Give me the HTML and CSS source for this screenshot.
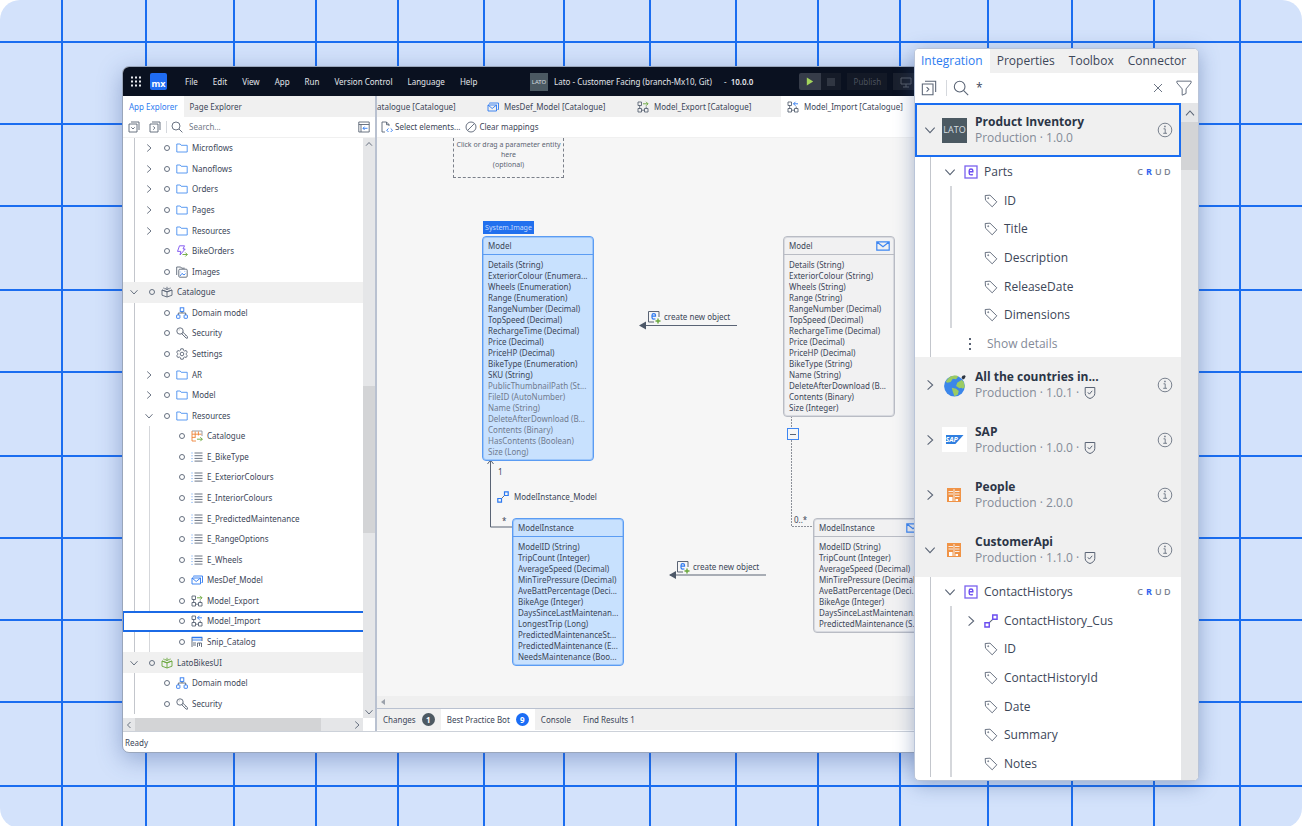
FILE: index.html
```html
<!DOCTYPE html>
<html lang="en">
<head>
<meta charset="utf-8">
<title>Lato - Customer Facing</title>
<link rel="stylesheet" href="styles.css">
</head>
<body>
<svg class="symbols" aria-hidden="true">
  <symbol id="right" viewBox="0 0 12 12"><path d="M4.2 2.5 8 6 4.2 9.5"/></symbol>
  <symbol id="down" viewBox="0 0 12 12"><path d="M2.5 4.2 6 8l3.5-3.8"/></symbol>
  <symbol id="up" viewBox="0 0 12 12"><path d="M3 7.7 6 4.5l3 3.2"/></symbol>
  <symbol id="left" viewBox="0 0 12 12"><path d="M7.5 3 4.5 6l3 3"/></symbol>
  <symbol id="folder" viewBox="0 0 12 12"><path stroke="#4a90f0" d="M.8 10V2h3.4l1 1.3h6V10z"/></symbol>
  <symbol id="flow" viewBox="0 0 12 12"><path stroke="#7a4ff0" d="M3.5.8h5L7 4h2.200L4 10l.8-3.600H1.500z"/><path stroke="#68a63a" d="M6.500 9.500h4.800M9.300 7.500l2 2-2 2"/></symbol>
  <symbol id="images" viewBox="0 0 12 12"><path d="M.7 9V1h4l1 1.200h3"/><rect x="2.800" y="3.200" width="8.400" height="8" rx="1"/><path stroke="#2b78f0" d="m4 10 2-2.600L8 9l1.500-1.400M8.600 5.400h.6M4.600 6h.5"/></symbol>
  <symbol id="module" viewBox="0 0 12 12"><path d="M6 5.800 1 4v5.200L6 11l5-1.800V4zM6 5.800V11M1 4l5 1.800L11 4M3.300 3.200 2.800 1.600M6 3.200V.8M8.700 3.200l.5-1.600M4 2.500 6 3.600l2-1.100"/></symbol>
  <symbol id="domain" viewBox="0 0 12 12"><path d="M6 4.500V6M2.300 8V6h7.400v2"/><g stroke="#2b78f0"><rect x="4.200" y=".8" width="3.600" height="3.600"/><rect x=".6" y="8" width="3.300" height="3.300" rx=".5"/><rect x="8.100" y="8" width="3.300" height="3.300" rx=".5"/></g></symbol>
  <symbol id="key" viewBox="0 0 12 12"><circle cx="4" cy="4" r="3.200"/><path d="m5.500 6.500 4.700 4.700h1.200V9.500L6.700 5M2.800 2.900h.6M8.500 9.500l1-1"/></symbol>
  <symbol id="gear" viewBox="0 0 12 12"><circle cx="6" cy="6" r="1.800"/><path d="m4.800.8-.4 1.600-1 .6-1.600-.5L.7 4.400 1.900 5.500v1L.7 7.600l1.100 1.900L3.400 9l1 .6.4 1.600h2.400l.4-1.600 1-.6 1.600.5 1.100-1.900-1.200-1.100v-1l1.200-1.100-1.100-1.900-1.600.5-1-.6L7.200.8z"/></symbol>
  <symbol id="service" viewBox="0 0 12 12"><path stroke="#8c929c" d="M1 1h10v5"/><path stroke="#ee8236" d="M5 11H1V1M1 4.200h9.500M4.200 1.500v6M7.400 1.500v4M1 7.400h3.500"/><path stroke="#68a63a" d="M6 9.200h5.300M9.300 7.200l2 2-2 2"/></symbol>
  <symbol id="enum" viewBox="0 0 12 12"><path stroke="#4a90f0" stroke-dasharray="1 1.800" d="M1 1.500v10"/><path d="M3.500 2h8M3.500 4.700h8M3.500 7.400h8M3.500 10.100h8"/></symbol>
  <symbol id="mesdef" viewBox="0 0 12 12"><path stroke="#2b78f0" d="M1 4h8.500v6H1zM1 4l4.200 3.500L9.500 4M2.500 2.500V2h9v6.500h-1"/></symbol>
  <symbol id="export" viewBox="0 0 12 12"><path d="M1 1h3.500v3.500H1zM1 7.500h3.500V11H1zM7.500 7.500H11V11H7.500zM2.700 4.500v3M4.500 9.200h3M9.200 7.500v-2"/><path stroke="#68a63a" d="M6 2.800h5M9 .8l2 2-2 2"/></symbol>
  <symbol id="import" viewBox="0 0 12 12"><path d="M1 1h3.500v3.500H1zM1 7.500h3.500V11H1zM7.500 7.500H11V11H7.500zM2.700 4.500v3M4.500 9.200h3M9.200 7.500v-2"/><path stroke="#2b78f0" d="M6.500 2.800H11M8.500.8l-2 2 2 2"/></symbol>
  <symbol id="snip" viewBox="0 0 12 12"><path d="M1 11V1.500h10V5M2 7h3M2 9h3M6.500 11V7h4v4M8.500 7v3"/><path stroke="#2b78f0" stroke-width="1.500" d="M.7 1.500h10.600"/><path stroke="#2b78f0" d="M1 4h10"/></symbol>
  <symbol id="collapse" viewBox="0 0 12 12"><path d="M1 3h8v8H1zM3 1h8v8M3.300 6.300 5 8l1.700-1.700"/></symbol>
  <symbol id="expand" viewBox="0 0 12 12"><path d="M1 3h8v8H1zM3 1h8v8M4.200 5.300 5.900 7 4.200 8.700"/></symbol>
  <symbol id="search" viewBox="0 0 12 12"><circle cx="5" cy="5" r="4"/><path d="m8 8 3.400 3.400"/></symbol>
  <symbol id="locate" viewBox="0 0 12 12"><path d="M.8 1h10.400v10H.8zM.8 3.500h10.400M3 3.500V11"/><path stroke="#2b78f0" d="M9.500 7.300H5M6.600 5.600 5 7.300 6.600 9"/></symbol>
  <symbol id="selectel" viewBox="0 0 12 12"><path d="M4 11H1V1h4.500l2.500 2.500V5M5.500 1v2.700H8"/><path stroke="#2b78f0" d="m7.500 7.500-1.800 1.700L7.500 11M9.700 7.500l1.800 1.700L9.700 11"/></symbol>
  <symbol id="clear" viewBox="0 0 12 12"><circle cx="6" cy="6" r="5"/><path d="m2.600 9.400 6.800-6.800"/></symbol>
  <symbol id="mail" viewBox="0 0 14 10"><path stroke="#3d86f2" stroke-width="1.200" d="M.8.8h12.400v8.400H.8zM1 1l6 4.700L13 1"/></symbol>
  <symbol id="newobj" viewBox="0 0 14 14"><path d="M7 12H1.500V1.500h10.500V7"/><path stroke="#2b78f0" stroke-width="1.200" d="M5 6.200h3.500V5c0-.8-.6-1.300-1.700-1.300S5 4.500 5 5.500v2c0 1 .6 1.600 1.700 1.600.8 0 1.200-.1 1.700-.4"/><path stroke="#68a63a" stroke-width="1.400" d="M11 8.500v5M8.500 11h5"/></symbol>
  <symbol id="assoc" viewBox="0 0 12 12"><path d="m4.300 7.700 3.400-3.400"/><path stroke="currentColor" stroke-width="1.200" d="M.8 7.500h3.700v3.700H.8zM7.500.8h3.700v3.700H7.500z"/></symbol>
  <symbol id="entity" viewBox="0 0 14 14"><rect x="1" y="1" width="12" height="12" stroke="#7a62ee" stroke-width="1.300"/><path stroke="#6a4cf0" stroke-width="1.400" d="M5.200 6.800h3.600V5.500c0-.9-.6-1.500-1.800-1.500s-1.800.7-1.800 1.700v2.500c0 1 .6 1.700 1.800 1.700.8 0 1.300-.1 1.800-.5"/></symbol>
  <symbol id="tag" viewBox="0 0 14 14"><path d="M1.200 1.500 6 1.200l6.800 6.600-4.600 5L1.500 6.200z"/><circle cx="4.200" cy="4.200" r=".5"/></symbol>
  <symbol id="info" viewBox="0 0 16 16"><circle cx="8" cy="8" r="6.800"/><path d="M6.500 6.800h1.700v4.400M6.200 11.300h3.800"/><path stroke-width="1.500" d="M7.300 4.500h1.300"/></symbol>
  <symbol id="shield" viewBox="0 0 12 14"><path d="M1.200 1.500h9.600v6c0 2.500-2.300 4.200-4.800 5-2.500-.8-4.800-2.500-4.800-5z"/><path d="m3.800 6.300 1.600 1.800 2.800-3.300"/></symbol>
  <symbol id="close" viewBox="0 0 12 12"><path d="m2 2 8 8M10 2l-8 8"/></symbol>
  <symbol id="funnel" viewBox="0 0 14 14"><path d="M.8 1h12.400v1.500L8.800 7.800v4l-3.400 1.500V7.800L.8 2.500z"/></symbol>
  <symbol id="table" viewBox="0 0 14 14"><path fill="#f09346" stroke="none" d="M0 0h14v14H0z"/><path stroke="#f6ede6" d="M7 1v12M1.500 3.500H6M1.500 6H6M8 3.500h4.500M8 6h4.500M8 8.500h4.500"/><path fill="#fff" stroke="none" d="M2 9h3.500v4H2zM8.500 11H11v2H8.500z"/></symbol>
  <symbol id="globe" viewBox="0 0 22 22"><circle cx="10.500" cy="12" r="9.500" fill="#3b86ea" stroke="none"/><path fill="#9bcb62" stroke="none" d="M7 3.200c3-1.300 6-1.200 7 0l-2 2.500-3-.5-2 3-3 .8-1.500-1C4 6 5 4 7 3.200zM13 9l4-2.500 2 1.500 1 5-2 1.500-1-1-2 .5-3-2zM8 13.500l4 1 2.500 2-1 3.500-3 1.300-1.500-4z"/><path fill="#2b3440" stroke="none" d="m17 4 1-1.500 2-.5.800 1.200L19.500 5.500 18 6z"/></symbol>
</svg>

<main class="desktop">
  <svg class="grid-lines" aria-hidden="true">
    <path d="M62 0V2000M146 0V2000M234 0V2000M316 0V2000M398 0V2000M484 0V2000M564 0V2000M650 0V2000M736 0V2000M818 0V2000M900 0V2000M988 0V2000M1072 0V2000M1154 0V2000M1240 0V2000M0 42H3000M0 124H3000M0 206H3000M0 290H3000M0 372H3000M0 456H3000M0 538H3000M0 620H3000M0 702H3000M0 786H3000"/>
  </svg>

  <section class="app">
    <header class="titlebar">
      <svg class="dots" viewBox="0 0 12 12"><path d="M1 1.500h11M1 5.500h11M1 9.500h11"/></svg>
      <span class="logo">mx</span>
      <nav class="menu"><button>File</button><button>Edit</button><button>View</button><button>App</button><button>Run</button><button>Version Control</button><button>Language</button><button>Help</button></nav>
      <span class="lato small">LATO</span>
      <span class="title">Lato - Customer Facing (branch-Mx10, Git)</span>
      <span class="version">- <b>10.0.0</b></span>
      <button class="run" aria-label="Run locally"><svg viewBox="0 0 10 10"><path d="M1 0v10l8-5z"/></svg></button>
      <button class="stop" aria-label="Stop"><i></i></button>
      <button class="publish">Publish</button>
      <button class="viewapp" aria-label="View app"><svg viewBox="0 0 12 12"><path d="M1 2h10v6H1zM6 8v3M3 11h6"/></svg></button>
    </header>
    <div class="workspace">
      <aside class="explorer">
        <div class="tabs"><button class="tab active">App Explorer</button><button class="tab">Page Explorer</button></div>
        <div class="tools">
          <button aria-label="Collapse all"><svg class="ic"><use href="#collapse"/></svg></button>
          <button aria-label="Expand"><svg class="ic"><use href="#expand"/></svg></button>
          <label class="find"><svg class="ic"><use href="#search"/></svg><input type="text" placeholder="Search..." aria-label="Search the app"></label>
          <button aria-label="Locate"><svg class="ic"><use href="#locate"/></svg></button>
        </div>
        <div class="tree-area">
          <ul class="tree">
            <li class="row l2"><svg class="ic tw"><use href="#right"/></svg><i class="dot"></i><svg class="ic"><use href="#folder"/></svg>Microflows</li>
            <li class="row l2"><svg class="ic tw"><use href="#right"/></svg><i class="dot"></i><svg class="ic"><use href="#folder"/></svg>Nanoflows</li>
            <li class="row l2"><svg class="ic tw"><use href="#right"/></svg><i class="dot"></i><svg class="ic"><use href="#folder"/></svg>Orders</li>
            <li class="row l2"><svg class="ic tw"><use href="#right"/></svg><i class="dot"></i><svg class="ic"><use href="#folder"/></svg>Pages</li>
            <li class="row l2"><svg class="ic tw"><use href="#right"/></svg><i class="dot"></i><svg class="ic"><use href="#folder"/></svg>Resources</li>
            <li class="row l2"><svg class="ic tw"></svg><i class="dot"></i><svg class="ic"><use href="#flow"/></svg>BikeOrders</li>
            <li class="row l2"><svg class="ic tw"></svg><i class="dot"></i><svg class="ic"><use href="#images"/></svg>Images</li>
            <li class="row l1"><svg class="ic tw"><use href="#down"/></svg><i class="dot"></i><svg class="ic"><use href="#module"/></svg>Catalogue</li>
            <li class="row l2"><svg class="ic tw"></svg><i class="dot"></i><svg class="ic"><use href="#domain"/></svg>Domain model</li>
            <li class="row l2"><svg class="ic tw"></svg><i class="dot"></i><svg class="ic"><use href="#key"/></svg>Security</li>
            <li class="row l2"><svg class="ic tw"></svg><i class="dot"></i><svg class="ic"><use href="#gear"/></svg>Settings</li>
            <li class="row l2"><svg class="ic tw"><use href="#right"/></svg><i class="dot"></i><svg class="ic"><use href="#folder"/></svg>AR</li>
            <li class="row l2"><svg class="ic tw"><use href="#right"/></svg><i class="dot"></i><svg class="ic"><use href="#folder"/></svg>Model</li>
            <li class="row l2"><svg class="ic tw"><use href="#down"/></svg><i class="dot"></i><svg class="ic"><use href="#folder"/></svg>Resources</li>
            <li class="row l3"><svg class="ic tw"></svg><i class="dot"></i><svg class="ic"><use href="#service"/></svg>Catalogue</li>
            <li class="row l3"><svg class="ic tw"></svg><i class="dot"></i><svg class="ic"><use href="#enum"/></svg>E_BikeType</li>
            <li class="row l3"><svg class="ic tw"></svg><i class="dot"></i><svg class="ic"><use href="#enum"/></svg>E_ExteriorColours</li>
            <li class="row l3"><svg class="ic tw"></svg><i class="dot"></i><svg class="ic"><use href="#enum"/></svg>E_InteriorColours</li>
            <li class="row l3"><svg class="ic tw"></svg><i class="dot"></i><svg class="ic"><use href="#enum"/></svg>E_PredictedMaintenance</li>
            <li class="row l3"><svg class="ic tw"></svg><i class="dot"></i><svg class="ic"><use href="#enum"/></svg>E_RangeOptions</li>
            <li class="row l3"><svg class="ic tw"></svg><i class="dot"></i><svg class="ic"><use href="#enum"/></svg>E_Wheels</li>
            <li class="row l3"><svg class="ic tw"></svg><i class="dot"></i><svg class="ic"><use href="#mesdef"/></svg>MesDef_Model</li>
            <li class="row l3"><svg class="ic tw"></svg><i class="dot"></i><svg class="ic"><use href="#export"/></svg>Model_Export</li>
            <li class="row l3 selected"><svg class="ic tw"></svg><i class="dot"></i><svg class="ic"><use href="#import"/></svg>Model_Import</li>
            <li class="row l3"><svg class="ic tw"></svg><i class="dot"></i><svg class="ic"><use href="#snip"/></svg>Snip_Catalog</li>
            <li class="row l1"><svg class="ic tw"><use href="#down"/></svg><i class="dot"></i><svg class="ic green"><use href="#module"/></svg>LatoBikesUI</li>
            <li class="row l2"><svg class="ic tw"></svg><i class="dot"></i><svg class="ic"><use href="#domain"/></svg>Domain model</li>
            <li class="row l2"><svg class="ic tw"></svg><i class="dot"></i><svg class="ic"><use href="#key"/></svg>Security</li>
          </ul>
          <div class="vbar"><svg class="ic"><use href="#up"/></svg><i class="thumb"></i><svg class="ic"><use href="#down"/></svg></div>
          <div class="hbar"><svg class="ic"><use href="#left"/></svg><i class="thumb"></i><svg class="ic"><use href="#right"/></svg></div>
        </div>
      </aside>

      <div class="editor">
        <div class="tabs">
          <button class="tab cut"><span>Catalogue [Catalogue]</span></button>
          <button class="tab doc"><svg class="ic"><use href="#mesdef"/></svg>MesDef_Model [Catalogue]</button>
          <button class="tab doc"><svg class="ic"><use href="#export"/></svg>Model_Export [Catalogue]</button>
          <button class="tab doc active"><svg class="ic"><use href="#import"/></svg>Model_Import [Catalogue]</button>
        </div>
        <div class="tools">
          <button><svg class="ic"><use href="#selectel"/></svg>Select elements...</button>
          <button><svg class="ic"><use href="#clear"/></svg>Clear mappings</button>
        </div>
        <div class="canvas">
          <svg class="wires" aria-hidden="true">
            <path d="M263 187.500H360M293 437H389M113.500 322V389H136M110.500 326l3-4 3 4"/>
            <path class="fill" d="M262 187.500l7-4v8zM292 437l7-4v8z"/>
            <path class="dash" d="M414.500 278V388.500H437"/>
          </svg>
          <div class="param">Click or drag a parameter entity here<br>(optional)</div>
          <div class="basis">System.Image</div>
          <article class="entity mapped e1">
            <h3>Model</h3>
            <ul><li>Details (String)</li><li>ExteriorColour (Enumera...</li><li>Wheels (Enumeration)</li><li>Range (Enumeration)</li><li>RangeNumber (Decimal)</li><li>TopSpeed (Decimal)</li><li>RechargeTime (Decimal)</li><li>Price (Decimal)</li><li>PriceHP (Decimal)</li><li>BikeType (Enumeration)</li><li>SKU (String)</li><li class="off">PublicThumbnailPath (St...</li><li class="off">FileID (AutoNumber)</li><li class="off">Name (String)</li><li class="off">DeleteAfterDownload (B...</li><li class="off">Contents (Binary)</li><li class="off">HasContents (Boolean)</li><li class="off">Size (Long)</li></ul>
          </article>
          <article class="entity mapped e2">
            <h3>ModelInstance</h3>
            <ul><li>ModelID (String)</li><li>TripCount (Integer)</li><li>AverageSpeed (Decimal)</li><li>MinTirePressure (Decimal)</li><li>AveBattPercentage (Deci...</li><li>BikeAge (Integer)</li><li>DaysSinceLastMaintenan...</li><li>LongestTrip (Long)</li><li>PredictedMaintenanceSt...</li><li>PredictedMaintenance (E...</li><li>NeedsMaintenance (Boo...</li></ul>
          </article>
          <article class="entity e3">
            <h3>Model<svg class="mail"><use href="#mail"/></svg></h3>
            <ul><li>Details (String)</li><li>ExteriorColour (String)</li><li>Wheels (String)</li><li>Range (String)</li><li>RangeNumber (Decimal)</li><li>TopSpeed (Decimal)</li><li>RechargeTime (Decimal)</li><li>Price (Decimal)</li><li>PriceHP (Decimal)</li><li>BikeType (String)</li><li>Name (String)</li><li>DeleteAfterDownload (B...</li><li>Contents (Binary)</li><li>Size (Integer)</li></ul>
          </article>
          <article class="entity e4">
            <h3>ModelInstance<svg class="mail"><use href="#mail"/></svg></h3>
            <ul><li>ModelID (String)</li><li>TripCount (Integer)</li><li>AverageSpeed (Decimal)</li><li>MinTirePressure (Decimal)</li><li>AveBattPercentage (Deci...</li><li>BikeAge (Integer)</li><li>DaysSinceLastMaintenan...</li><li>PredictedMaintenance (S...</li></ul>
          </article>
          <div class="note n1"><svg><use href="#newobj"/></svg>create new object</div>
          <div class="note n2"><svg><use href="#newobj"/></svg>create new object</div>
          <div class="note n3"><svg class="ic blue"><use href="#assoc"/></svg>ModelInstance_Model</div>
          <span class="note n4">1</span>
          <span class="note n5">*</span>
          <span class="note n6">0..*</span>
          <button class="fold" aria-label="Collapse"></button>
        </div>
        <div class="canvas-bar"><i></i></div>
        <div class="tabs dock">
          <button class="tab">Changes<b class="count">1</b></button>
          <button class="tab active">Best Practice Bot<b class="count blue-bg">9</b></button>
          <button class="tab">Console</button>
          <button class="tab">Find Results 1</button>
        </div>
      </div>
    </div>
    <footer class="status">Ready</footer>
  </section>

  <section class="panel">
    <div class="ptabs"><button class="ptab active">Integration</button><button class="ptab">Properties</button><button class="ptab">Toolbox</button><button class="ptab">Connector</button></div>
    <div class="ptools">
      <button aria-label="Expand"><svg class="i16"><use href="#expand"/></svg></button>
      <label class="find"><svg class="i16"><use href="#search"/></svg><input type="text" value="*" aria-label="Search services"></label>
      <button aria-label="Clear"><svg class="i12"><use href="#close"/></svg></button>
      <button aria-label="Filter"><svg class="i16"><use href="#funnel"/></svg></button>
    </div>
    <div class="plist">
      <div class="services">
        <div class="svc current"><svg class="i16"><use href="#down"/></svg><span class="lato">LATO</span><div class="who"><strong>Product Inventory</strong><span>Production · 1.0.0</span></div><svg class="i16"><use href="#info"/></svg></div>
        <ul class="members">
          <li class="head"><svg class="i16"><use href="#down"/></svg><svg class="i14"><use href="#entity"/></svg>Parts<span class="crud"><i>C</i><b>R</b><i>U</i><i>D</i></span></li>
          <li class="attr"><svg class="i14"><use href="#tag"/></svg>ID</li>
          <li class="attr"><svg class="i14"><use href="#tag"/></svg>Title</li>
          <li class="attr"><svg class="i14"><use href="#tag"/></svg>Description</li>
          <li class="attr"><svg class="i14"><use href="#tag"/></svg>ReleaseDate</li>
          <li class="attr"><svg class="i14"><use href="#tag"/></svg>Dimensions</li>
          <li class="more"><svg class="i14" viewBox="0 0 14 14"><path stroke-width="2" stroke-dasharray="2 3" d="M7 1v12"/></svg>Show details</li>
        </ul>
        <div class="svc"><svg class="i16"><use href="#right"/></svg><svg class="pic"><use href="#globe"/></svg><div class="who"><strong>All the countries in...</strong><span>Production · 1.0.1 ·<svg class="shield"><use href="#shield"/></svg></span></div><svg class="i16"><use href="#info"/></svg></div>
        <div class="svc"><svg class="i16"><use href="#right"/></svg><span class="sap"><em>SAP</em></span><div class="who"><strong>SAP</strong><span>Production · 1.0.0 ·<svg class="shield"><use href="#shield"/></svg></span></div><svg class="i16"><use href="#info"/></svg></div>
        <div class="svc"><svg class="i16"><use href="#right"/></svg><svg class="pic tbl"><use href="#table"/></svg><div class="who"><strong>People</strong><span>Production · 2.0.0</span></div><svg class="i16"><use href="#info"/></svg></div>
        <div class="svc"><svg class="i16"><use href="#down"/></svg><svg class="pic tbl"><use href="#table"/></svg><div class="who"><strong>CustomerApi</strong><span>Production · 1.1.0 ·<svg class="shield"><use href="#shield"/></svg></span></div><svg class="i16"><use href="#info"/></svg></div>
        <ul class="members">
          <li class="head"><svg class="i16"><use href="#down"/></svg><svg class="i14"><use href="#entity"/></svg>ContactHistorys<span class="crud"><i>C</i><b>R</b><i>U</i><i>D</i></span></li>
          <li class="attr nested"><svg class="i16"><use href="#right"/></svg><svg class="i14 violet"><use href="#assoc"/></svg>ContactHistory_Cus</li>
          <li class="attr"><svg class="i14"><use href="#tag"/></svg>ID</li>
          <li class="attr"><svg class="i14"><use href="#tag"/></svg>ContactHistoryId</li>
          <li class="attr"><svg class="i14"><use href="#tag"/></svg>Date</li>
          <li class="attr"><svg class="i14"><use href="#tag"/></svg>Summary</li>
          <li class="attr"><svg class="i14"><use href="#tag"/></svg>Notes</li>
        </ul>
      </div>
      <div class="pbar"><svg class="i16"><use href="#up"/></svg><i></i></div>
    </div>
  </section>
</main>
</body>
</html>
```
FILE: styles.css
```css
* { box-sizing: border-box; }
html { background: #fff; }
body { margin: 0; font: 8px/12px "Noto Sans", "Open Sans", sans-serif; color: #3c4658; }
button { font: inherit; color: inherit; background: none; border: 0; padding: 0; display: flex; align-items: center; white-space: nowrap; }
ul { list-style: none; margin: 0; padding: 0; }
h3 { margin: 0; font: inherit; }
input { font: inherit; color: inherit; border: 0; padding: 0; background: none; min-width: 0; width: 100%; outline: 0; }
input::placeholder { color: #737a87; opacity: 1; }
svg { fill: none; stroke: #5a6475; stroke-width: 1; flex: none; display: block; }
.symbols { position: absolute; width: 0; height: 0; }
.ic, .i12 { width: 12px; height: 12px; stroke-width: .9; }
.i14 { width: 14px; height: 14px; stroke-width: .9; }
.i16 { width: 16px; height: 16px; stroke-width: .8; }
.green { stroke: #68a63a; }
.blue { color: #2b78f0; }
.violet { color: #6a4cf0; }

.desktop { position: relative; display: grid; grid-template-columns: minmax(0, 1fr) 285px; min-height: 100vh; padding: 48px 103px 47px 122px; background: #d3e2fb; border-radius: 20px; overflow: hidden; }
.grid-lines { position: absolute; inset: 0; width: 100%; height: 100%; stroke: #1a6df0; stroke-width: 2; }

/* application window */
.app { position: relative; display: flex; flex-direction: column; margin: 18px -20px 28px 0; background: #fff; border: 1px solid #9aa6bb; border-radius: 7px; overflow: hidden; box-shadow: 0 6px 24px rgba(50, 80, 150, .4); }
.titlebar { display: flex; align-items: center; height: 29px; padding-left: 7px; background: #0a1120; color: #e2e5ea; overflow: hidden; }
.dots { width: 12px; height: 12px; stroke: #e8eaee; stroke-width: 2; stroke-dasharray: 2 2; }
.logo { width: 17px; height: 17px; margin-left: 8px; border-radius: 2px; background: #1f6cf2; color: #fff; font-size: 9px; font-weight: 700; line-height: 21px; text-align: center; }
.menu { display: flex; gap: 15px; margin-left: 18px; width: 345px; }
.lato { display: grid; place-items: center; background: #4b5962; color: #d7dde0; font-size: 9px; }
.lato.small { width: 18px; height: 18px; font-size: 6px; }
.title { min-width: 165px; margin-left: 6px; white-space: nowrap; }
.version { margin-left: 5px; white-space: nowrap; }
.version b { font-weight: 600; margin-left: 2px; }
.run { justify-content: center; width: 22px; height: 17px; margin-left: 46px; background: #363c49; border-radius: 2px 0 0 2px; }
.run svg { width: 8px; height: 9px; fill: #a3d45c; stroke: none; }
.stop { justify-content: center; width: 20px; height: 17px; background: #151b28; }
.stop i { width: 8px; height: 8px; background: #303642; }
.publish { justify-content: center; width: 40px; height: 17px; margin-left: 6px; background: #131926; color: #4b515d; }
.viewapp { justify-content: center; width: 26px; height: 17px; margin-left: 6px; background: #1a202d; }
.viewapp svg { width: 12px; height: 12px; stroke: #565c69; }

.workspace { flex: 1; display: grid; grid-template-columns: 254px minmax(0, 1fr); }
.explorer { display: flex; flex-direction: column; min-width: 0; border-right: 2px solid #b9c1d0; }
.tabs { display: flex; height: 21px; background: #f0f0f0; }
.tab { padding: 0 6px; }
.tab.active { background: #fff; }
.explorer .tab.active { color: #2d7cf0; }
.tools { display: flex; align-items: center; height: 21px; padding: 0 5px; gap: 9px; border-bottom: 1px solid #f0f0f0; }
.find { flex: 1; display: flex; align-items: center; gap: 6px; padding-left: 5px; border-left: 1px solid #d5d8dd; }
.explorer .find { margin-left: -4px; padding-left: 4px; }
.tree-area { flex: 1; display: grid; grid-template: minmax(0, 1fr) 13px / minmax(0, 1fr) 12px; }
.tree { display: grid; grid-auto-rows: 1fr; padding: 0 0 4px; }
.row { display: flex; align-items: center; gap: 4px; padding-left: 5px; white-space: nowrap; background: no-repeat 11px 0 / 1px 100% linear-gradient(#c3c6cc, #c3c6cc); }
.row.l1 { background: #f0f0f0; }
.row.l2 { padding-left: 20px; }
.row.l3 { padding-left: 35px; background: no-repeat 11px 0 / 1px 100% linear-gradient(#c3c6cc, #c3c6cc), no-repeat 26px 0 / 1px 100% linear-gradient(#d5d7db, #d5d7db); }
.row.selected { padding-left: 34px; border: solid #1b6ae6; border-width: 2px 0 2px 1px; background: none; }
.tw { margin-right: 5px; }
.dot { width: 6px; height: 6px; margin-right: 2px; border: 1px solid #667080; border-radius: 50%; }
.vbar { display: grid; grid-template-rows: 12px 1fr 12px; justify-items: center; background: #e5e6e8; }
.vbar .thumb { width: 12px; height: 147px; margin-top: 236px; background: #d3d4d6; }
.hbar { display: grid; grid-template-columns: 12px 186px 1fr; align-items: center; justify-items: center; background: #e5e6e8; }
.hbar .ic:last-child { justify-self: end; }
.hbar .thumb { width: 100%; height: 13px; background: #d3d4d6; }

.editor { display: flex; flex-direction: column; min-width: 0; }
.editor .tools { padding: 0 4px; gap: 5px; }
.editor .tools button { gap: 2px; }
.doc { gap: 5px; min-width: 150px; padding: 0 6px; }
.cut { width: 104px; padding: 0; overflow: hidden; }
.cut span { margin-left: -5px; }
.canvas { position: relative; flex: 1; min-height: 558px; background: #f6f6f6; overflow: hidden; }
.wires { position: absolute; inset: 0; width: 100%; height: 100%; }
.wires .fill { fill: #4d5868; stroke: none; }
.wires .dash { stroke: #8c9099; stroke-dasharray: 2 1; }
.param { position: absolute; left: 76px; top: 0; width: 111px; height: 40px; padding: 2px 1px; border: 1px dashed #7b808a; border-top: 0; font-size: 7px; line-height: 10px; text-align: center; color: #5b6473; }
.basis { position: absolute; left: 106px; top: 83px; width: 51px; height: 13px; background: #2270ee; color: #c5dbff; font-size: 7px; line-height: 13px; text-align: center; }
.entity { position: absolute; width: 112px; background: #f1f1f2; border: 1px solid #b9bcc4; border-radius: 4px; box-shadow: 0 0 0 1px #d8dae0 inset; }
.entity h3 { display: flex; align-items: center; justify-content: space-between; height: 18px; padding: 0 4px 0 5px; border-bottom: 1px solid #b9bcc4; }
.entity ul { padding: 4px 4px 3px 5px; line-height: 11px; }
.entity li { white-space: nowrap; }
.mail { width: 14px; height: 10px; }
.mapped { background: #c8e1fe; border-color: #5b9cf3; box-shadow: 0 0 0 1px #9cc6fa inset; }
.mapped h3 { border-color: #5b9cf3; }
.off { color: #707b8e; }
.e1 { left: 105px; top: 98px; }
.e2 { left: 135px; top: 380px; }
.e3 { left: 406px; top: 98px; }
.e4 { left: 436px; top: 380px; }
.note { position: absolute; display: flex; align-items: center; gap: 3px; line-height: 12px; white-space: nowrap; }
.note svg:not(.ic) { width: 14px; height: 14px; }
.n1 { left: 270px; top: 172px; }
.n2 { left: 299px; top: 422px; }
.n3 { left: 120px; top: 353px; gap: 5px; }
.n4 { left: 121px; top: 328px; }
.n5 { left: 125px; top: 377px; }
.n6 { left: 417px; top: 376px; }
.fold { position: absolute; left: 410px; top: 290px; width: 12px; height: 12px; padding: 0 2px; border: 1px solid #3d86f2; background: #f6f6f6; }
.fold::before { content: ""; width: 100%; height: 1px; background: #5a6475; }
.canvas-bar { height: 12px; padding: 3px 4px; background: #efefef; }
.canvas-bar i { display: block; width: 0; border: solid transparent; border-width: 3px 4px 3px 0; border-right-color: #9ba1ab; }
.dock { height: 23px; border-top: 1px solid #b9c1d0; border-bottom: 1px solid #fff; }
.dock .tab { gap: 6px; }
.count { width: 13px; height: 13px; border-radius: 50%; background: #4d5962; color: #fff; line-height: 13px; text-align: center; }
.blue-bg { background: #1a6df5; }
.status { height: 21px; padding: 0 2px; border-top: 1px solid #ccd1d9; line-height: 21px; }

/* integration panel */
.panel { position: relative; display: flex; flex-direction: column; background: #fff; border: 1px solid #b9c4d8; border-radius: 5px; overflow: hidden; font: 12px/16px "Open Sans", "Noto Sans", sans-serif; box-shadow: 0 4px 20px rgba(50, 80, 140, .4); }
.ptabs { display: flex; height: 24px; background: #f0f0f0; }
.ptab { padding: 0 7px; }
.ptab.active { padding: 0 7px 0 6px; background: #fff; color: #2d7cf0; }
.ptools { display: flex; align-items: center; gap: 17px; height: 30px; padding: 0 6px; }
.ptools > button:last-child { margin-left: -5px; }
.ptools .find { gap: 7px; margin-left: -8px; padding-left: 6px; }
.plist { flex: 1; display: grid; grid-template-columns: minmax(0, 1fr) 17px; }
.svc { display: flex; align-items: center; height: 55px; padding: 0 8px 0 7px; background: #f0f0f0; }
.svc.current { border: 2px solid #1a6df0; height: 54px; padding: 0 6px 0 5px; }
.svc .lato, .sap { width: 25px; height: 25px; margin: 0 8px 0 4px; }
.svc svg.pic { width: 24px; height: 24px; margin: 0 8px 0 5px; }
.svc svg.tbl { width: 14px; height: 14px; margin: 0 14px 0 9px; }
.sap { display: grid; place-items: center; background: #fff; }
.sap em { width: 18px; height: 9px; background: #2f7fe0; clip-path: polygon(0 0, 100% 0, 55% 100%, 0 100%); color: #fff; font-weight: 700; font-size: 7px; line-height: 9px; }
.who { flex: 1; min-width: 0; }
.who strong { display: block; color: #2b3546; font-weight: 700; }
.who span { display: flex; align-items: center; color: #848b98; }
.shield { width: 12px; height: 14px; margin-left: 5px; }
.members { display: grid; grid-auto-rows: 1fr; height: 200px; background: no-repeat 15px 0 / 1px 100% linear-gradient(#c3c6cc, #c3c6cc); }
.members li { display: flex; align-items: center; gap: 6px; padding-top: 2px; }
.members .head { padding: 2px 11px 0 27px; }
.attr { padding-left: 69px; background: no-repeat 35px 0 / 2px 100% linear-gradient(#d5d7db, #d5d7db); }
.nested { padding-left: 48px; }
.nested .i16 { margin-right: -1px; }
.more { padding-left: 48px; color: #848b98; }
.members .more { gap: 10px; }
.crud { display: flex; gap: 3px; margin-left: auto; font-size: 9px; color: #7b8290; }
.crud i, .crud b { width: 6px; font-style: normal; font-weight: 600; text-align: center; }
.crud b { color: #2f62f0; font-weight: 700; }
.pbar { display: grid; grid-template-rows: 19px 48px; justify-items: center; align-items: center; background: #e5e6e8; }
.pbar i { width: 17px; height: 48px; background: #d3d4d6; }
```
